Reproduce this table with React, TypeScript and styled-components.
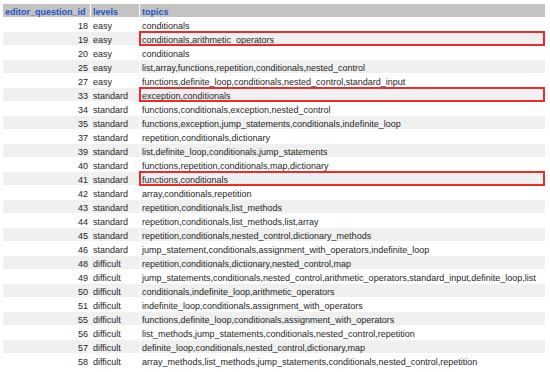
import React from "react";
import styled, { createGlobalStyle } from "styled-components";

const Global = createGlobalStyle`
  html, body { margin: 0; padding: 0; background: #ffffff; }
  body { font-family: "Liberation Sans", Arial, sans-serif; }
`;

const Page = styled.div`
  padding: 3px 0 0 2px;
`;

const Table = styled.table`
  border-collapse: separate;
  border-spacing: 1px;
  table-layout: fixed;
  width: 544px;
  font-family: "Liberation Sans", Arial, sans-serif;
  font-size: 9px;
  line-height: 10px;
`;

const HeadCell = styled.th<{ $w: number }>`
  width: ${(p) => p.$w}px;
  padding: 3px 2px 0 2px;
  line-height: 10px;
  background: #c3c3c3;
  color: #1d56c4;
  font-weight: bold;
  text-align: left;
  white-space: nowrap;
  overflow: hidden;
`;

const Row = styled.tr<{ $alt: boolean }>`
  background: ${(p) => (p.$alt ? "#f0f0f0" : "#ffffff")};
`;

const Cell = styled.td<{ $align?: "left" | "right"; $marked?: boolean }>`
  position: relative;
  padding: 3px 2px 0 2px;
  line-height: 10px;
  color: #1e1e1e;
  text-align: ${(p) => p.$align ?? "left"};
  white-space: nowrap;
  &::after {
    content: "";
    display: ${(p) => (p.$marked ? "block" : "none")};
    position: absolute;
    left: -1px;
    top: -1px;
    right: 0px;
    bottom: -1px;
    border: 2px solid #ee2b2b;
    pointer-events: none;
  }
`;

type Item = { id: number; level: string; topics: string; marked?: boolean };

const rows: Item[] = [
  { id: 18, level: "easy", topics: "conditionals" },
  { id: 19, level: "easy", topics: "conditionals,arithmetic_operators", marked: true },
  { id: 20, level: "easy", topics: "conditionals" },
  { id: 25, level: "easy", topics: "list,array,functions,repetition,conditionals,nested_control" },
  { id: 27, level: "easy", topics: "functions,definite_loop,conditionals,nested_control,standard_input" },
  { id: 33, level: "standard", topics: "exception,conditionals", marked: true },
  { id: 34, level: "standard", topics: "functions,conditionals,exception,nested_control" },
  { id: 35, level: "standard", topics: "functions,exception,jump_statements,conditionals,indefinite_loop" },
  { id: 37, level: "standard", topics: "repetition,conditionals,dictionary" },
  { id: 39, level: "standard", topics: "list,definite_loop,conditionals,jump_statements" },
  { id: 40, level: "standard", topics: "functions,repetition,conditionals,map,dictionary" },
  { id: 41, level: "standard", topics: "functions,conditionals", marked: true },
  { id: 42, level: "standard", topics: "array,conditionals,repetition" },
  { id: 43, level: "standard", topics: "repetition,conditionals,list_methods" },
  { id: 44, level: "standard", topics: "repetition,conditionals,list_methods,list,array" },
  { id: 45, level: "standard", topics: "repetition,conditionals,nested_control,dictionary_methods" },
  { id: 46, level: "standard", topics: "jump_statement,conditionals,assignment_with_operators,indefinite_loop" },
  { id: 48, level: "difficult", topics: "repetition,conditionals,dictionary,nested_control,map" },
  { id: 49, level: "difficult", topics: "jump_statements,conditionals,nested_control,arithmetic_operators,standard_input,definite_loop,list" },
  { id: 50, level: "difficult", topics: "conditionals,indefinite_loop,arithmetic_operators" },
  { id: 51, level: "difficult", topics: "indefinite_loop,conditionals,assignment_with_operators" },
  { id: 55, level: "difficult", topics: "functions,definite_loop,conditionals,assignment_with_operators" },
  { id: 56, level: "difficult", topics: "list_methods,jump_statements,conditionals,nested_control,repetition" },
  { id: 57, level: "difficult", topics: "definite_loop,conditionals,nested_control,dictionary,map" },
  { id: 58, level: "difficult", topics: "array_methods,list_methods,jump_statements,conditionals,nested_control,repetition" },
];

export default function App() {
  return (
    <Page>
      <Global />
      <Table>
        <thead>
          <tr>
            <HeadCell $w={83}>editor_question_id</HeadCell>
            <HeadCell $w={44}>levels</HeadCell>
            <HeadCell $w={401}>topics</HeadCell>
          </tr>
        </thead>
        <tbody>
          {rows.map((r, i) => (
            <Row key={r.id} $alt={i % 2 === 1}>
              <Cell $align="right">{r.id}</Cell>
              <Cell>{r.level}</Cell>
              <Cell $marked={r.marked}>{r.topics}</Cell>
            </Row>
          ))}
        </tbody>
      </Table>
    </Page>
  );
}
